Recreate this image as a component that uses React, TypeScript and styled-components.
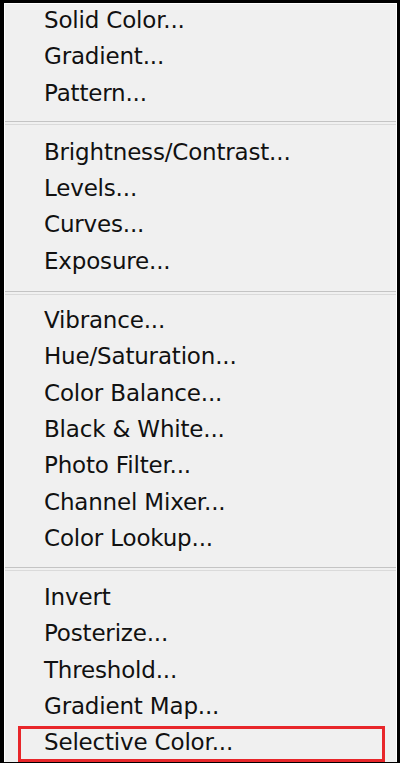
import React from "react";
import styled, { createGlobalStyle } from "styled-components";

const Global = createGlobalStyle`
  html, body { margin: 0; padding: 0; background: #f0f0f0; }
  * { box-sizing: border-box; }
`;

const Menu = styled.div`
  width: 400px;
  height: 763px;
  overflow: hidden;
  background: #000;
  padding: 3px 3px 1px 4px;
`;

const Inner = styled.div`
  height: 100%;
  background: #f0f0f0;
  border-top: 1px solid #ffffff;
  border-left: 1px solid #ffffff;
  border-right: 1px solid #ffffff;
  display: flex;
  flex-direction: column;
`;

const Item = styled.div<{ $highlight?: boolean }>`
  position: relative;
  height: 36.3px;
  flex: none;
  padding-left: 39px;
  padding-bottom: 4.3px;
  display: flex;
  align-items: center;
  font-family: "DejaVu Sans", Verdana, sans-serif;
  font-size: 23px;
  letter-spacing: -0.18px;
  color: #111;
  white-space: nowrap;
  &::after {
    content: "";
    display: ${(p) => (p.$highlight ? "block" : "none")};
    position: absolute;
    left: 13px;
    right: 11px;
    top: 0;
    height: 30px;
    border: 3px solid #e8262a;
  }
`;

const Separator = styled.div<{ $pad: number }>`
  flex: none;
  height: 23px;
  padding-top: ${(p) => p.$pad}px;
  &::before {
    content: "";
    display: block;
    height: 2px;
    border-top: 1px solid #c4c4c4;
    border-bottom: 1px solid #dadada;
  }
`;

const sections: string[][] = [
  ["Solid Color...", "Gradient...", "Pattern..."],
  ["Brightness/Contrast...", "Levels...", "Curves...", "Exposure..."],
  [
    "Vibrance...",
    "Hue/Saturation...",
    "Color Balance...",
    "Black & White...",
    "Photo Filter...",
    "Channel Mixer...",
    "Color Lookup...",
  ],
  ["Invert", "Posterize...", "Threshold...", "Gradient Map...", "Selective Color..."],
];

const sepPad = [8, 10, 9];

export default function App() {
  return (
    <>
      <Global />
      <Menu>
        <Inner>
          {sections.map((sec, si) => (
            <React.Fragment key={si}>
              {si > 0 && <Separator $pad={sepPad[si - 1]} />}
              {sec.map((label) => (
                <Item key={label} $highlight={label === "Selective Color..."}>
                  {label}
                </Item>
              ))}
            </React.Fragment>
          ))}
        </Inner>
      </Menu>
    </>
  );
}
